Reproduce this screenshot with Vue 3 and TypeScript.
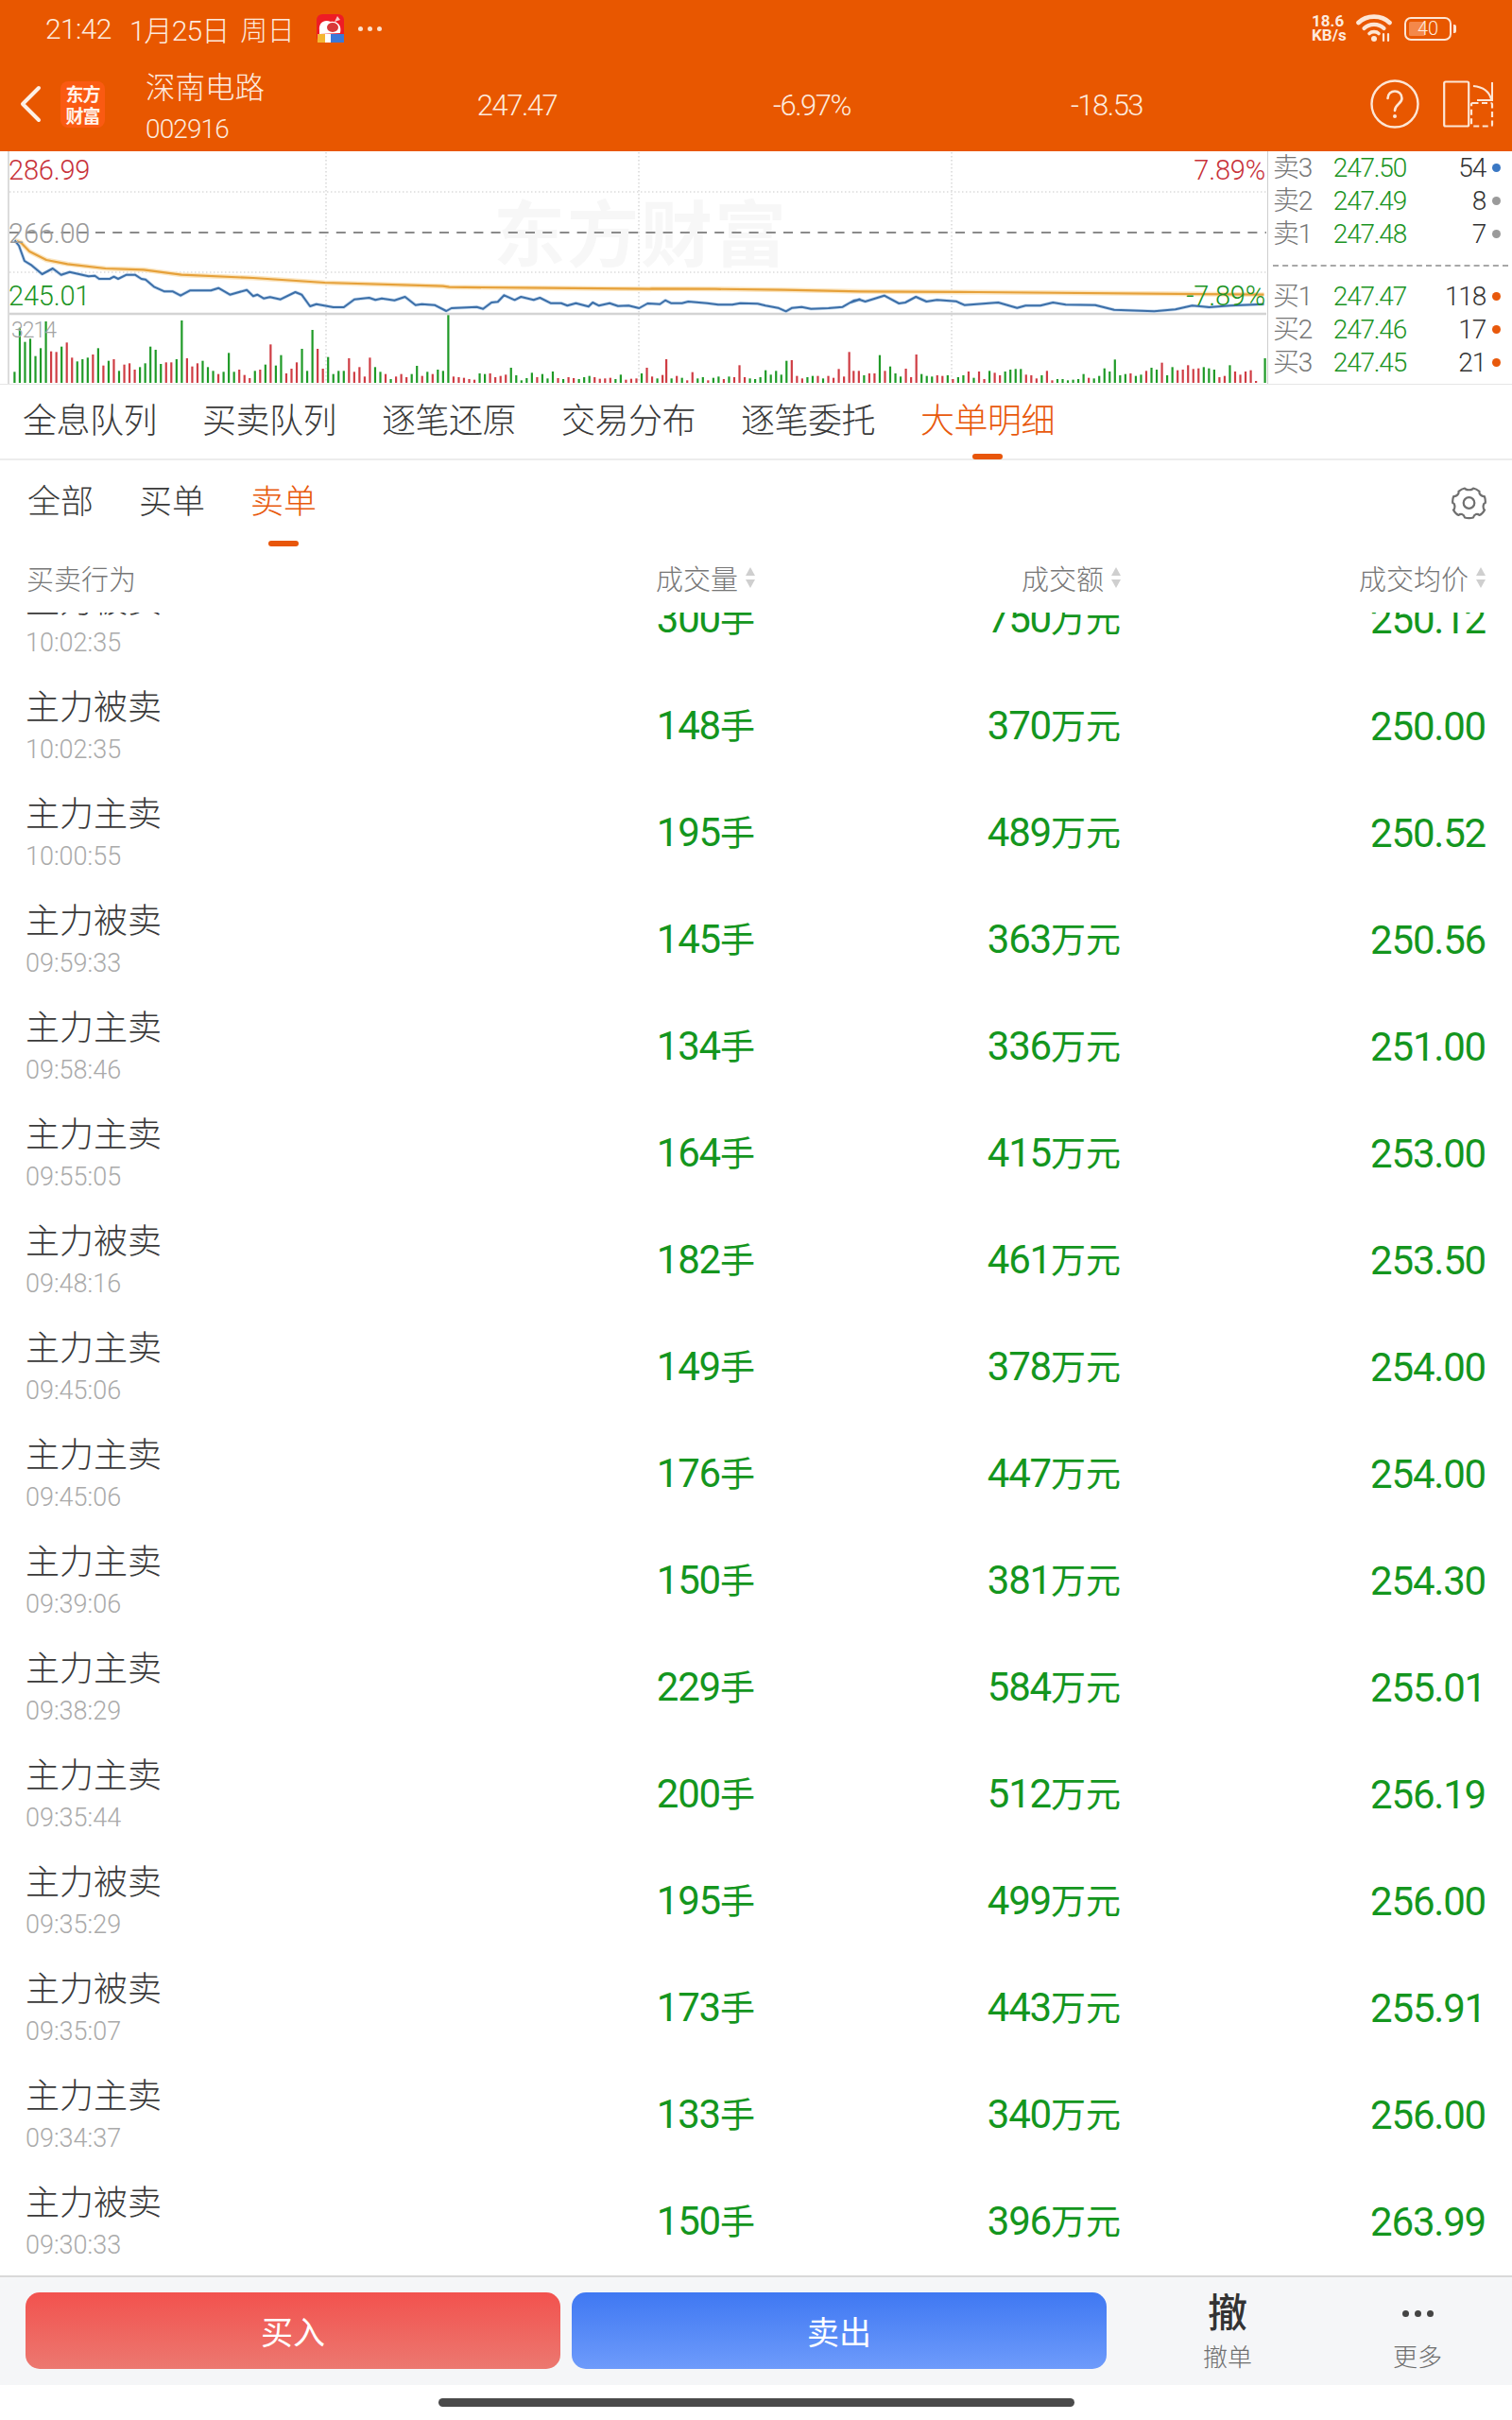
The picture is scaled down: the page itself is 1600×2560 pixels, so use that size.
<script setup lang="ts">
interface Row { a: string; t: string; v: string; m: string; p: string }
const rows: Row[] = ([
  ['主力被卖','10:02:35','300','750','250.12'],
  ['主力被卖','10:02:35','148','370','250.00'],
  ['主力主卖','10:00:55','195','489','250.52'],
  ['主力被卖','09:59:33','145','363','250.56'],
  ['主力主卖','09:58:46','134','336','251.00'],
  ['主力主卖','09:55:05','164','415','253.00'],
  ['主力被卖','09:48:16','182','461','253.50'],
  ['主力主卖','09:45:06','149','378','254.00'],
  ['主力主卖','09:45:06','176','447','254.00'],
  ['主力主卖','09:39:06','150','381','254.30'],
  ['主力主卖','09:38:29','229','584','255.01'],
  ['主力主卖','09:35:44','200','512','256.19'],
  ['主力被卖','09:35:29','195','499','256.00'],
  ['主力被卖','09:35:07','173','443','255.91'],
  ['主力主卖','09:34:37','133','340','256.00'],
  ['主力被卖','09:30:33','150','396','263.99'],
] as string[][]).map(r => ({ a: r[0], t: r[1], v: r[2], m: r[3], p: r[4] }))

const tabs = ['全息队列','买卖队列','逐笔还原','交易分布','逐笔委托','大单明细']
const subs = ['全部','买单','卖单']
const quote = ['247.47','-6.97%','-18.53']

const book = [
  { l:'卖3', p:'247.50', q:'54', d:'#3a78c4' },
  { l:'卖2', p:'247.49', q:'8', d:'#9a9a9a' },
  { l:'卖1', p:'247.48', q:'7', d:'#9a9a9a' },
]
const book2 = [
  { l:'买1', p:'247.47', q:'118', d:'#e8590c' },
  { l:'买2', p:'247.46', q:'17', d:'#e8590c' },
  { l:'买3', p:'247.45', q:'21', d:'#e8590c' },
]

const z3 = (s: string) => s.trim().split(/\s+/).map(p => { const [x,y] = p.split(',').map(Number); return `${(x/2.24).toFixed(1)},${(y/3+160).toFixed(1)}` })
const z9 = (s: string) => s.trim().split(/\s+/).map(p => { const [x,y] = p.split(',').map(Number); return `${(x/3+690).toFixed(1)},${(y/3+160).toFixed(1)}` })
const z4 = (s: string) => s.trim().split(/\s+/).map(p => { const [x,y] = p.split(',').map(Number); return `${(x/2.24+900).toFixed(1)},${(y/3+160).toFixed(1)}` })

const orange = [
  ...z3('35,283 50,290 70,318 110,345 160,358 250,372 340,376 430,392 600,402 770,417 1050,428 1065,431 1300,434 1540,437'),
  ...z9('0,436 200,437 420,440 660,445'),
  ...z4('300,447 980,455'),
].join(' ')

const blue = [
  ...z3('35,283 45,300 58,348 75,362 100,390 125,372 145,392 165,383 210,397 225,395 235,405 260,405 270,398 280,405 300,392 320,392 335,405 345,407 365,430 390,445 410,445 428,458 450,442 500,442 518,434 545,455 585,440 600,460 610,455 625,467 640,463 665,470 700,447 715,455 735,492 750,485 790,495 815,495 840,470 875,465 890,472 905,467 935,473 960,462 985,488 1000,485 1030,488 1058,507 1070,498 1130,494 1145,500 1165,480 1180,478 1195,457 1220,472 1235,462 1265,472 1280,465 1305,482 1330,482 1345,490 1365,482 1395,493 1405,480 1420,490 1445,482 1465,491 1490,490 1515,498 1535,483'),
  ...z9('0,484 25,485 42,473 60,482 95,482 115,477 175,482 210,487 255,487 280,482 335,484 360,490 400,497 425,508 445,497 475,494 505,500 560,498 605,494 640,474 660,470'),
  ...z4('0,480 20,470 35,477 80,458 115,483 130,480 155,462 180,477 205,472 250,476 270,488 350,480 395,497 415,490 450,490 480,480 510,487 580,488 625,503 720,508 770,502 810,490 850,495 900,490 980,485'),
].join(' ')

const seg1 = 'g35 g175 g130 g140 g85 g110 g195 r100 r98 g115 r128 r80 g68 g75 g80 r90 g110 r55 g70 r75 g38 r58 r62 r42 g50 g62 g115 g105 g60 r65 r65 g75 g198 r78 r52 r62 g70 g50 g38 r28 g35 g95 g35 r42 r25 r15 g38 r42 g58 r122 g55 g88 r30 r45 r65 g108 g38 g168 r108 r45 g82 g28 g38 g38 r78 r35 r50 r20 r80 g50 g35 r28 g12 r20 r28 r18 g28 g54 r22 g35 r28 g42 g38 g215 r20 r18 r16 r12 r10 g30 g28 r30 r18 r22 r26 g48 g24 g8 g15 g32 r18 g28 g14 g36 r15 g12 r18 r15 g12 g18 g22 r18 r13 r14 r16 g12 g26 r10 r13 r14 g30 r48 r20 g14 r25'
const seg2 = 'r75 g14 r22 g16 r8 r34 g14 g18 r8 g16 g20 r12 g20 r18 r56 r18 g14 g12 g18 g40 g26 g38 g26 g70 r72 r22 r14 g18 g22 r22 g14 r22 r16 r44 r20 r98'
const seg3 = 'r38 r38 g24 r30 r30 g88 r38 g52 g30 g20 r45 r18 r90 g28 g22 g20 r24 r22 g24 r12 g18 g24 r36 g16 r36 r12 g38 r32 r24 g36 g42 g44 g44 r26 r24 r14 g24 r38 r8 g12 g12 g8 g10 g12 g28 r16 g14 g22 g46 g36 g74 g24 g28 r30 g22 g26 r38 g48 g42 r64 g24 g50 r40 r42 r56 r44 r46 g50 g46 g42 r18 r22 g56 r36 r26 r36 r40 r6'

interface Bar { x: number; y: number; h: number; c: string }
const parse = (s: string, x0: number, step: number): Bar[] => s.split(' ').map((t, i) => {
  const h = Number(t.slice(1)) / 3
  return { x: x0 + i * step, y: 405 - h, h, c: t[0] === 'g' ? '#1f9a27' : '#cf3d44' }
})
const bars: Bar[] = [
  ...parse(seg1, 14.3, 5.53),
  ...parse(seg2, 704, 5.53),
  ...parse(seg3, 902.2, 5.53),
  { x: 1337.5, y: 379, h: 26, c: '#1f9a27' },
]
const gridV = [345, 676, 1007]
</script>

<template>
  <div class="page">
    <header class="top">
      <div class="status">
        <span class="st-time">21:42</span>
        <span class="st-date">1月25日</span>
        <span class="st-week">周日</span>
        <svg class="mascot" width="29" height="30" viewBox="0 0 29 30">
          <rect x="0" y="0" width="29" height="30" rx="6" fill="#ee1c25" />
          <path d="M3 17 C2 8 9 5 15 8 C22 7 27 12 25 20 L3 21Z" fill="#fff" />
          <ellipse cx="17" cy="14" rx="6" ry="5" fill="#d93a3a" />
          <path d="M22 2 L19 8 L25 6Z" fill="#f7c8c8" />
          <rect x="1" y="21" width="13" height="9" fill="#f4b733" />
          <rect x="9" y="21" width="6" height="9" fill="#fff" />
          <rect x="15" y="21" width="14" height="9" fill="#3b78d8" />
        </svg>
        <span class="st-dots"><i></i><i></i><i></i></span>
        <span class="st-grow"></span>
        <span class="st-speed"><b>18.6</b><b>KB/s</b></span>
        <svg class="wifi" width="38" height="30" viewBox="0 0 38 30" fill="none" stroke="#fde6d5" stroke-linecap="round">
          <path d="M2.5 9 C11 0.5 27 0.5 35.5 9" stroke-width="4.6" />
          <path d="M8.5 15 C14 9.5 24 9.5 29.5 15" stroke-width="4.2" />
          <path d="M14 20.5 C16.5 18 21.5 18 24 20.5" stroke-width="3.6" />
          <circle cx="19" cy="26" r="3" fill="#fde6d5" stroke="none" />
          <path d="M29 21 V28 M34 21 V28" stroke-width="2.2" />
        </svg>
        <div class="battery">
          <div class="bat-fill"></div>
          <span>40</span>
        </div>
        <i class="bat-nub"></i>
      </div>

      <nav class="nav">
        <svg class="back" width="24" height="40" viewBox="0 0 24 40" fill="none">
          <path d="M21 3 L4 20 L21 37" stroke="#fdf0e6" stroke-width="4" stroke-linecap="round" stroke-linejoin="round" />
        </svg>
        <div class="logo"><span>东方</span><span>财富</span></div>
        <div class="name">
          <div class="name-t">深南电路</div>
          <div class="name-c">002916</div>
        </div>
        <div class="quote">
          <span v-for="q in quote" :key="q">{{ q }}</span>
        </div>
        <svg class="help" width="52" height="52" viewBox="0 0 52 52" fill="none" stroke="#fde6d5">
          <circle cx="26" cy="26" r="24.5" stroke-width="2.4" />
          <path d="M18.5 20 C18.5 10 33.5 10 33.5 20 C33.5 26 26 26 26 33" stroke-width="2.6" stroke-linecap="round" />
          <circle cx="26" cy="39" r="2" fill="#fde6d5" stroke="none" />
        </svg>
        <svg class="fold" width="54" height="50" viewBox="0 0 54 50" fill="none" stroke="#fde6d5" stroke-width="2.2">
          <rect x="1.2" y="1.5" width="26" height="47" rx="1.5" />
          <path d="M32 6 C42 7 49 12 51 20 M52 2 V21 H36" stroke-width="2" />
          <rect x="30" y="24" width="22" height="24.5" rx="1.5" stroke-dasharray="6 3.5" />
        </svg>
      </nav>
    </header>

    <section class="market">
      <svg class="chart" width="1341" height="246" viewBox="0 160 1341 246">
        <text x="522" y="276" class="wm">东方财富</text>
        <line v-for="x in gridV" :key="x" :x1="x" :x2="x" y1="161" y2="405" stroke="#d8d8d8" stroke-width="1.5" stroke-dasharray="1.5 2.5" />
        <line x1="10" x2="1340" y1="203" y2="203" stroke="#dcdcdc" stroke-width="1.5" stroke-dasharray="1.5 2.5" />
        <line x1="10" x2="1340" y1="288" y2="288" stroke="#dcdcdc" stroke-width="1.5" stroke-dasharray="1.5 2.5" />
        <line x1="9" x2="9" y1="160" y2="406" stroke="#dcdcdc" stroke-width="2" />
        <line x1="10" x2="1340" y1="246" y2="246" stroke="#8a8a8a" stroke-width="2" stroke-dasharray="10 8.2" />
        <line x1="10" x2="1340" y1="332" y2="332" stroke="#d4d4d4" stroke-width="2.5" />
        <rect v-for="(b, i) in bars" :key="i" :x="b.x" :y="b.y" width="2.2" :height="b.h" :fill="b.c" />
        <polyline :points="orange" fill="none" stroke="#fbe6c2" stroke-width="5" stroke-linejoin="round" />
        <polyline :points="orange" fill="none" stroke="#e6a13a" stroke-width="2.2" stroke-linejoin="round" />
        <polyline :points="blue" fill="none" stroke="#c6daef" stroke-width="3.6" stroke-linejoin="round" />
        <polyline :points="blue" fill="none" stroke="#3c6fa8" stroke-width="2" stroke-linejoin="round" />
        <text x="9" y="190" class="ct red">286.99</text>
        <text x="9" y="257" class="ct gray">266.00</text>
        <text x="9" y="323" class="ct green">245.01</text>
        <text x="12" y="357" class="ct small">3214</text>
        <text x="1339" y="190" text-anchor="end" class="ct red">7.89%</text>
        <text x="1339" y="323" text-anchor="end" class="ct green">-7.89%</text>
      </svg>
      <div class="book">
        <div v-for="b in book" :key="b.l" class="b-row">
          <span class="b-l">{{ b.l }}</span>
          <span class="b-p">{{ b.p }}</span>
          <span class="b-q">{{ b.q }}</span>
          <i class="b-d" :style="{ background: b.d }"></i>
        </div>
        <div class="b-sep"></div>
        <div v-for="b in book2" :key="b.l" class="b-row">
          <span class="b-l">{{ b.l }}</span>
          <span class="b-p">{{ b.p }}</span>
          <span class="b-q">{{ b.q }}</span>
          <i class="b-d" :style="{ background: b.d }"></i>
        </div>
      </div>
    </section>

    <div class="tabs">
      <div v-for="(t, i) in tabs" :key="t" class="tab" :class="{ on: i === 5 }">{{ t }}</div>
    </div>

    <div class="subs">
      <div v-for="(s, i) in subs" :key="s" class="sub" :class="{ on: i === 2 }">{{ s }}</div>
      <svg class="gear" width="37" height="36" viewBox="0 0 37 36" fill="none" stroke="#6f6f6f" stroke-width="2.2" stroke-linejoin="round">
        <path d="M14 2.5 C15 4.8 22 4.8 23 2.5 C25.5 3 27.5 4.2 29.5 5.8 C28.8 8.5 32 11.5 34.8 11 C35.7 13.2 36 15.5 35.8 18 C33 18.5 33 24 35 25.5 C33.8 27.8 32.2 30 29.5 31 C27.5 29 24 29.5 23 33.5 C20.5 34.2 16.5 34.2 14 33.5 C13 29.5 9.5 29 7.5 31 C4.8 30 3.2 27.8 2 25.5 C4 24 4 18.5 1.2 18 C1 15.5 1.3 13.2 2.2 11 C5 11.5 8.2 8.5 7.5 5.8 C9.5 4.2 11.5 3 14 2.5 Z" />
        <circle cx="18.5" cy="18" r="5.8" />
      </svg>
    </div>

    <div class="thead">
      <span>买卖行为</span>
      <span class="th"><span>成交量</span><i class="sort"></i></span>
      <span class="th"><span>成交额</span><i class="sort"></i></span>
      <span class="th"><span>成交均价</span><i class="sort"></i></span>
    </div>

    <div class="list">
      <div class="list-inner">
        <div v-for="(r, i) in rows" :key="i" class="row">
          <div class="who">
            <div class="who-a">{{ r.a }}</div>
            <div class="who-t">{{ r.t }}</div>
          </div>
          <span class="num">{{ r.v }}<span class="u">手</span></span>
          <span class="num">{{ r.m }}<span class="u">万元</span></span>
          <span class="num">{{ r.p }}</span>
        </div>
      </div>
    </div>

    <footer class="bar">
      <button class="btn buy">买入</button>
      <button class="btn sell">卖出</button>
      <div class="act act1">
        <div class="act-i">撤</div>
        <div class="act-t">撤单</div>
      </div>
      <div class="act act2">
        <div class="act-i dots"><i></i><i></i><i></i></div>
        <div class="act-t">更多</div>
      </div>
    </footer>
    <div class="home"><i></i></div>
  </div>
</template>

<style scoped>
.page {
  width: 1600px;
  height: 2560px;
  display: flex;
  flex-direction: column;
  background: #fff;
  overflow: hidden;
  font-family: Roboto, "Noto Sans CJK SC", sans-serif;
  font-weight: 300;
  color: #333;
}
i { display: block; font-style: normal; }

.top { height: 160px; background: #e85700; color: #fdeadd; display: flex; flex-direction: column; flex: none; }
.status { height: 60px; display: flex; align-items: center; padding-left: 48px; font-size: 30px; letter-spacing: -0.6px; }
.st-date { margin-left: 19px; letter-spacing: -0.9px; }
.st-week { margin-left: 12px; font-size: 29px; }
.mascot { margin-left: 24px; }
.st-dots { display: flex; gap: 5px; margin-left: 15px; }
.st-dots i { width: 5px; height: 5px; border-radius: 50%; background: #fde0cb; }
.st-grow { flex: 1; }
.st-speed { display: flex; flex-direction: column; width: 44px; font-size: 17px; line-height: 15px; letter-spacing: 0; margin-right: 3px; }
.st-speed b { font-weight: 700; }
.wifi { margin-right: 13px; }
.battery { position: relative; width: 50px; height: 25px; border: 2.4px solid #fde6d5; border-radius: 7px; box-sizing: border-box; display: flex; align-items: center; justify-content: center; font-size: 20px; letter-spacing: 0; }
.bat-fill { position: absolute; left: 3px; top: 3px; bottom: 3px; width: 17px; background: #f4884a; border-radius: 1.5px; }
.battery span { position: relative; }
.bat-nub { width: 3px; height: 9px; background: #fde6d5; border-radius: 0 2px 2px 0; margin: 0 59px 0 2px; }

.nav { height: 100px; display: flex; align-items: center; padding-left: 20px; }
.back { flex: none; }
.logo { width: 47px; height: 49px; margin-left: 20px; border-radius: 8px; background: #fa5a12; display: flex; flex-direction: column; align-items: center; justify-content: center; font-size: 19px; line-height: 23px; font-weight: 700; color: #fff3ea; flex: none; letter-spacing: -1px; font-family: "Noto Sans CJK SC", sans-serif; }
.name { width: 237px; margin-left: 43px; flex: none; align-self: stretch; padding-top: 12px; box-sizing: border-box; }
.name-t { font-size: 31.5px; line-height: 44px; }
.name-c { font-size: 28px; line-height: 34px; letter-spacing: -0.9px; margin-top: 4px; }
.quote { display: grid; grid-template-columns: repeat(3, 312px); font-size: 31px; letter-spacing: -1.5px; text-align: center; flex: none; padding-top: 2px; font-weight: 350; }
.help { margin-left: 123px; flex: none; }
.fold { margin-left: 25px; flex: none; }

.market { height: 246px; display: flex; border-bottom: 1px solid #e6e6e6; flex: none; }
.chart { display: block; flex: none; }
.wm { font-size: 76px; font-weight: 700; fill: #f7f7f7; font-family: "Noto Sans CJK SC", sans-serif; letter-spacing: 2px; }
.ct { font-size: 29px; font-family: Roboto, sans-serif; font-weight: 350; letter-spacing: -0.2px; }
.red { fill: #c8323a; }
.gray { fill: #9a9a9a; }
.green { fill: #1b9424; }
.small { font-size: 23px; fill: #a4a4a4; font-weight: 300; letter-spacing: -1px; }

.book { width: 258px; border-left: 1px solid #cfcfcf; padding-left: 5px; box-sizing: border-box; flex: none; }
.b-row { height: 35px; display: flex; align-items: center; font-size: 28px; letter-spacing: -1.2px; font-weight: 350; line-height: 35px; }
.b-l { width: 47px; color: #777; font-weight: 300; }
.b-p { width: 94px; text-align: right; color: #1b9424; }
.b-q { width: 84px; text-align: right; color: #333; }
.b-d { width: 9px; height: 9px; border-radius: 50%; margin-left: 7px; }
.b-sep { height: 31px; display: flex; align-items: center; }
.b-sep::before { content: ""; display: block; width: 249px; height: 0; border-top: 2px dashed #a8a8a8; }

.tabs { height: 78px; display: flex; gap: 50px; padding: 0 24px; border-bottom: 2px solid #ececec; flex: none; align-items: center; font-size: 36px; color: #3a3a3a; }
.tab { width: 140px; white-space: nowrap; position: relative; line-height: 44px; letter-spacing: -0.5px; }
.tab.on { color: #e8590c; }
.tab.on::after { content: ""; position: absolute; left: 55px; bottom: -18px; width: 32px; height: 6px; border-radius: 3px; background: #e8560a; }

.subs { height: 93px; display: flex; align-items: center; padding: 0 27px 3px 29px; gap: 48px; font-size: 35px; color: #3a3a3a; flex: none; box-sizing: border-box; }
.sub { position: relative; height: 44px; line-height: 44px; }
.sub.on { color: #e8590c; }
.sub.on::after { content: ""; position: absolute; left: 19px; top: 62px; width: 32px; height: 6px; border-radius: 3px; background: #e8560a; }
.gear { margin-left: auto; }

.thead { height: 68px; display: grid; grid-template-columns: 472px 300px 387px 386px; padding: 0 27px 6px 28px; align-items: center; font-size: 29px; color: #777; flex: none; box-sizing: border-box; }
.th { display: flex; justify-content: flex-end; align-items: center; gap: 8px; }
.sort { width: 11px; height: 26px; position: relative; }
.sort::before, .sort::after { content: ""; position: absolute; left: 0; border-left: 5.5px solid transparent; border-right: 5.5px solid transparent; }
.sort::before { top: 2px; border-bottom: 9px solid #cfcfcf; }
.sort::after { bottom: 2px; border-top: 9px solid #cfcfcf; }

.list { flex: 1; min-height: 0; overflow: hidden; }
.list-inner { margin-top: -49px; }
.row { height: 113px; display: grid; grid-template-columns: 472px 300px 387px 386px; padding: 0 27px 0 27px; align-items: center; box-sizing: border-box; }
.who { align-self: start; padding-top: 16px; }
.who-a { font-size: 36px; line-height: 43px; color: #3a3a3a; }
.who-t { font-size: 27px; line-height: 44px; color: #aaa; letter-spacing: 0; }
.num { text-align: right; font-size: 42px; line-height: 44px; color: #14961e; letter-spacing: -1.2px; white-space: nowrap; font-weight: 400; }
.u { font-size: 37px; letter-spacing: 0; font-weight: 400; }

.bar { height: 116px; background: #f5f6f8; border-top: 2px solid #d9d9d9; display: flex; flex: none; box-sizing: border-box; padding: 16px 0 0 27px; align-items: flex-start; }
.btn { width: 566px; height: 81px; border: 0; border-radius: 15px; color: #fff; font-family: "Noto Sans CJK SC", sans-serif; font-weight: 400; font-size: 34px; padding: 0; }
.buy { background: linear-gradient(#f2524e, #ec7870); }
.sell { background: linear-gradient(#3f78f2, #6e9bfb); margin-left: 12px; }
.act { text-align: center; color: #333; width: 120px; }
.act1 { margin-left: 68px; }
.act2 { margin-left: 81px; }
.act-i { height: 52px; font-size: 42px; line-height: 46px; font-weight: 500; }
.act-t { font-size: 26px; line-height: 34px; color: #6f6f6f; }
.dots { display: flex; justify-content: center; align-items: center; gap: 6px; height: 52px; padding-bottom: 8px; box-sizing: border-box; }
.dots i { width: 7px; height: 7px; border-radius: 50%; background: #444; }

.home { height: 37px; flex: none; display: flex; justify-content: center; padding-top: 14px; box-sizing: border-box; }
.home i { width: 673px; height: 9px; border-radius: 5px; background: #4a4a4a; }
</style>
